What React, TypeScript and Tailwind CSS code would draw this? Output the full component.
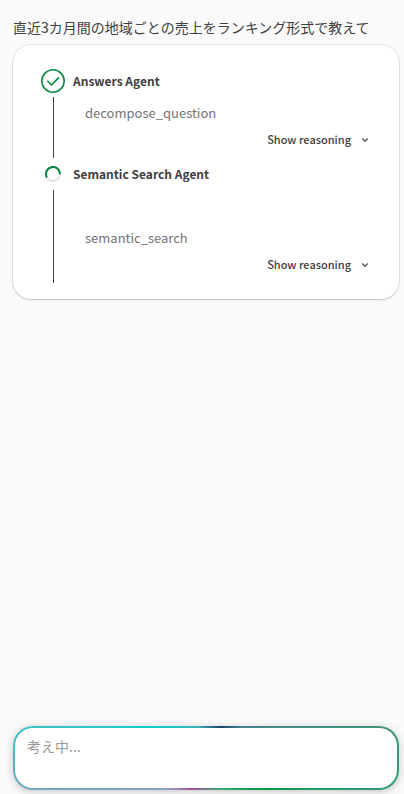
import React from 'react';

interface Step {
  id: number;
  agent: string;
  tool: string;
  status: 'DONE' | 'RUNNING';
}

const steps: Step[] = [
  { id: 1, agent: 'Answers Agent', tool: 'decompose_question', status: 'DONE' },
  { id: 2, agent: 'Semantic Search Agent', tool: 'semantic_search', status: 'RUNNING' }
];

const DoneIcon: React.FC = () => (
  <svg className="w-6 h-6" viewBox="0 0 24 24" fill="none" stroke="#0f8a45">
    <circle cx="12" cy="12" r="11.2" strokeWidth="1.6" />
    <path d="M6.3 11.7l4.2 4.2 7.5-7.5" strokeWidth="1.6" />
  </svg>
);

const Spinner: React.FC = () => (
  <svg className="w-4 h-4" viewBox="0 0 16 16" fill="none" strokeWidth="2">
    <circle cx="8" cy="8" r="7" stroke="#e6e6e6" />
    <path d="M1.9 11.4A7 7 0 1 1 15 8.2" stroke="#00873d" />
  </svg>
);

const StepItem: React.FC<{ step: Step }> = ({ step }) => (
  <li>
    <div className="flex items-center gap-2 h-8">
      <div className="w-6 flex justify-center">
        {step.status === 'DONE' ? <DoneIcon /> : <Spinner />}
      </div>
      <h2 className="text-xs font-bold text-[#404040]">{step.agent}</h2>
    </div>

    <div className={`ml-3 border-l border-[#404040] pl-[31px] pb-[9px] ${step.status === 'RUNNING' ? 'pt-8' : ''}`}>
      <p className="text-[13px] leading-8 text-[#737373]">{step.tool}</p>
      <div className="flex justify-end">
        <button className="flex items-center gap-2 h-5 text-[11px] leading-4 font-medium text-[#404040]">
          Show reasoning
          <svg className="w-3 h-3" viewBox="0 0 12 12" fill="none" stroke="#595959" strokeWidth="1.5">
            <path d="M3.3 5.5l2.7 2.7 2.7-2.7" />
          </svg>
        </button>
      </div>
    </div>
  </li>
);

const App: React.FC = () => {
  return (
    <div className="min-h-screen flex flex-col bg-[#fafafa] pl-[13px] pr-[5px] pt-4 pb-1 font-['Noto_Sans_CJK_JP',sans-serif]">
      <p className="text-sm leading-[22px] text-[#404040]">直近3カ月間の地域ごとの売上をランキング形式で教えて</p>

      <ol className="mt-[7px] rounded-[18px] bg-white pt-5 pb-4 px-7 shadow-[0_0_0_1px_rgba(0,0,0,0.07),0_1px_2px_rgba(0,0,0,0.15)]">
        {steps.map((step) => (
          <StepItem key={step.id} step={step} />
        ))}
      </ol>

      <div className="mt-auto rounded-[20px] p-[2px] bg-[conic-gradient(from_26deg,#19426c,#4a8090_24deg,#449080_50deg,#2f9a70_75deg,#009845_90deg,#45a878_130deg,#a54e9b_180deg,#8fa0c0_205deg,#70a8c0_235deg,#55b2c2_244deg,#3fc0c2_253deg,#10cfc9_270deg,#40b0b8_320deg,#19426c)] shadow-[0_2px_10px_rgba(0,0,0,0.2)]">
        <textarea
          aria-label="質問"
          rows={2}
          placeholder="考え中..."
          className="block w-full h-[60px] resize-none rounded-[18px] bg-white px-3 py-2 text-sm leading-5 text-[#404040] placeholder:text-[#999999] focus:outline-none"
        />
      </div>
    </div>
  );
};

export default App;
